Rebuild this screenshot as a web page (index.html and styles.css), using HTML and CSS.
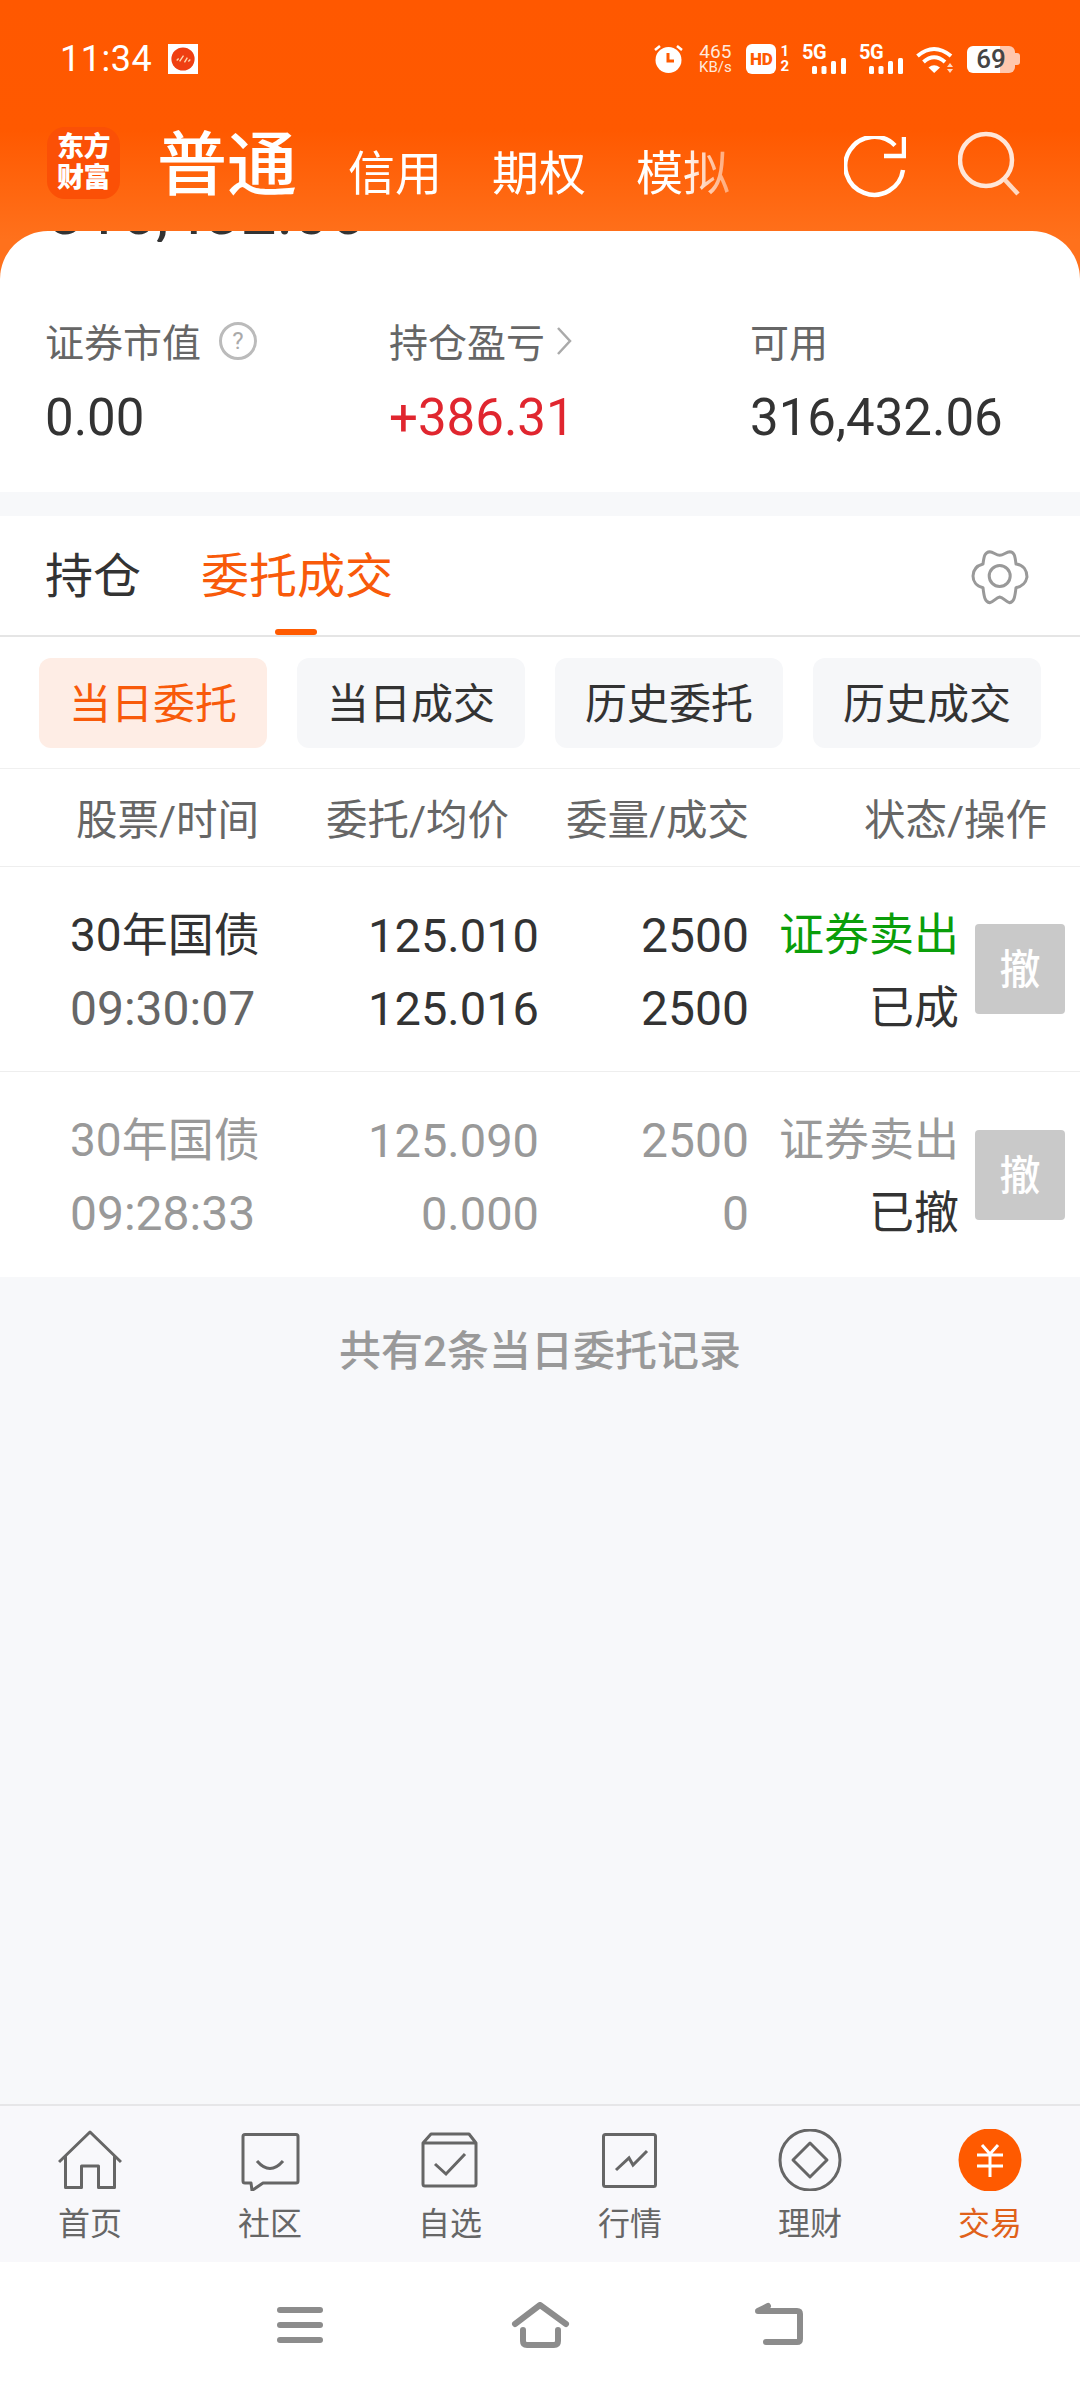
FILE: index.html
```html
<!DOCTYPE html>
<html lang="zh-CN">
<head>
<meta charset="utf-8">
<title>交易</title>
<link rel="stylesheet" href="styles.css">
</head>
<body>
<div class="screen">
  <div class="top">
    <div class="status">
      <div class="status-left">
        <span class="clock">11:34</span>
        <span class="notif"><svg width="30" height="30" viewBox="0 0 31 31"><rect width="31" height="31" fill="#fff"/><circle cx="15.500" cy="15.500" r="12" fill="#ef3f12"/><path d="M9 17l2-2M12 18l4-6M17 19l3-5M21 18l2-2" stroke="#ffd9b0" stroke-width="1.400" fill="none"/></svg></span>
      </div>
      <div class="status-right">
        <svg width="30" height="30" viewBox="0 0 30 30"><circle cx="14.500" cy="16" r="13" fill="#fff"/><path d="M1 6l5-4M28 6l-5-4" stroke="#fff" stroke-width="2.600"/><path d="M14 9v8h6" stroke="#ff5a00" stroke-width="3" fill="none"/></svg>
        <span class="net"><b>465</b><i>KB/s</i></span>
        <span class="hd-wrap"><span class="hd">HD</span><span class="sim"><b>1</b><b>2</b></span></span>
        <span class="sig"><span class="five">5G</span><svg width="34" height="16" viewBox="0 0 34 16"><rect y="8" width="5" height="8" rx="1.500" fill="#fff"/><rect x="9.500" y="8" width="5" height="8" rx="1.500" fill="#fff"/><rect x="19" y="3" width="5" height="13" rx="1.500" fill="#fff"/><rect x="29" width="5" height="16" rx="1.500" fill="#fff"/></svg></span>
        <span class="sig"><span class="five">5G</span><svg width="34" height="16" viewBox="0 0 34 16"><rect y="8" width="5" height="8" rx="1.500" fill="#fff"/><rect x="9.500" y="8" width="5" height="8" rx="1.500" fill="#fff"/><rect x="19" y="3" width="5" height="13" rx="1.500" fill="#fff"/><rect x="29" width="5" height="16" rx="1.500" fill="#fff"/></svg></span>
        <svg width="38" height="30" viewBox="0 0 38 30"><path d="M1.500 12Q18 -2 35 12M7.500 18Q18 8.500 29 18" stroke="#fff" stroke-width="4" fill="none"/><path d="M12.500 23.500Q18 19 24 23.500L18.200 29Z" fill="#fff"/><path d="M34 19l3 4h-6zM34 29l3-4h-6z" fill="#ffd9c2"/></svg>
        <span class="battery"><span class="batt-body">69</span><span class="batt-nub"></span></span>
      </div>
    </div>
    <div class="appbar">
      <div class="logo"><span>东方</span><span>财富</span></div>
      <div class="main-tab">普通</div>
      <div class="sub-tabs"><span>信用</span><span>期权</span><span>模拟</span></div>
      <div class="app-actions">
        <svg width="62" height="62" viewBox="0 0 62 62"><path d="M59 34A29 29 0 1 1 51 9.500" stroke="#fff" stroke-width="4.500" fill="none"/><path d="M40 20H60V1" stroke="#fff" stroke-width="4.500" fill="none"/></svg>
        <svg class="search" width="62" height="66" viewBox="0 0 62 66"><circle cx="28" cy="29" r="26" stroke="#ffe6d8" stroke-width="4.500" fill="none"/><path d="M47 49L60 63" stroke="#ffd9c2" stroke-width="4.500"/></svg>
      </div>
    </div>
    <div class="card">
      <div class="peek"><span>316,432.06</span></div>
      <div class="stats">
        <div class="stat">
          <div class="stat-label">证券市值<span class="help">?</span></div>
          <div class="stat-value">0.00</div>
        </div>
        <div class="stat">
          <div class="stat-label">持仓盈亏<svg class="chev" width="18" height="30" viewBox="0 0 18 30"><path d="M3 2L15 15L3 28" stroke="#aaa" stroke-width="2.500" fill="none"/></svg></div>
          <div class="stat-value up">+386.31</div>
        </div>
        <div class="stat">
          <div class="stat-label">可用</div>
          <div class="stat-value">316,432.06</div>
        </div>
      </div>
    </div>
  </div>

  <div class="panel">
    <div class="tabs">
      <span class="tab">持仓</span>
      <span class="tab tab-on">委托成交</span>
      <svg class="gear" width="60" height="60" viewBox="22 17 60 60"><path d="M51.700 24.300C55.500 24.300 58 21 61.700 20.700C66 21 67 24 68 33C76 34 79 40 79 46C78 51 76 55 68 56.700C67 66 66 71 61.700 71.700C58 71 55.500 66.500 51.700 66C48 66.500 45.500 71 41.700 71.700C37 71 36 66 35 56.700C28 55 25 50 25 45C25 40 28 35 35 33C36 25 37 21 41.700 20.700C45.500 21 48 24.300 51.700 24.300Z" stroke="#999" stroke-width="3" fill="none" stroke-linejoin="round"/><circle cx="51.700" cy="45" r="10.500" stroke="#999" stroke-width="3" fill="none"/></svg>
    </div>
    <div class="filters">
      <span class="filter filter-on">当日委托</span>
      <span class="filter">当日成交</span>
      <span class="filter">历史委托</span>
      <span class="filter">历史成交</span>
    </div>
    <div class="thead">
      <span>股票/时间</span>
      <span>委托/均价</span>
      <span>委量/成交</span>
      <span class="th-end">状态/操作</span>
    </div>
    <div class="order">
      <span class="name">30年国债</span>
      <span class="num">125.010</span>
      <span class="num qty">2500</span>
      <span class="num word buy">证券卖出</span>
      <span class="cancel">撤</span>
      <span class="time">09:30:07</span>
      <span class="num">125.016</span>
      <span class="num qty">2500</span>
      <span class="num word">已成</span>
    </div>
    <div class="order order-off">
      <span class="name">30年国债</span>
      <span class="num">125.090</span>
      <span class="num qty">2500</span>
      <span class="num word">证券卖出</span>
      <span class="cancel">撤</span>
      <span class="time">09:28:33</span>
      <span class="num">0.000</span>
      <span class="num qty">0</span>
      <span class="num word state">已撤</span>
    </div>
  </div>

  <div class="summary">共有2条当日委托记录</div>

  <nav class="bottom">
    <div class="item">
      <svg width="64" height="62" viewBox="0 0 64 62"><path d="M1 33L32 3L63 33M7.500 27V58.500H23.500V37H40.500V58.500H56.500V27" stroke="#666" stroke-width="3" fill="none" stroke-linejoin="round"/></svg>
      <span>首页</span>
    </div>
    <div class="item">
      <svg width="64" height="62" viewBox="0 0 64 62"><path d="M7 5.500H58Q60 5.500 60 7.500V52Q60 54 58 54H25L14 61.500L13 54H7Q5 54 5 52V7.500Q5 5.500 7 5.500Z" stroke="#666" stroke-width="3" fill="none" stroke-linejoin="round"/><path d="M19 32Q32 47 45 32" stroke="#666" stroke-width="3" fill="none"/></svg>
      <span>社区</span>
    </div>
    <div class="item">
      <svg width="64" height="62" viewBox="0 0 64 62"><path d="M13 5H51L58 14V55Q58 57 56 57H7Q5 57 5 55V14ZM5 14H58" stroke="#666" stroke-width="3" fill="none" stroke-linejoin="round"/><path d="M17 35L28 45L47 25" stroke="#666" stroke-width="3" fill="none"/></svg>
      <span>自选</span>
    </div>
    <div class="item">
      <svg width="64" height="62" viewBox="0 0 64 62"><rect x="5.500" y="5.500" width="52" height="52" rx="2" stroke="#666" stroke-width="3" fill="none"/><path d="M18 41L31 29L35 36L49 22" stroke="#666" stroke-width="3" fill="none"/></svg>
      <span>行情</span>
    </div>
    <div class="item">
      <svg width="64" height="62" viewBox="0 0 64 62"><circle cx="32" cy="31" r="30" stroke="#666" stroke-width="3" fill="none"/><path d="M32 14L49 31L32 48L15 31Z" stroke="#666" stroke-width="3" fill="none" stroke-linejoin="round"/></svg>
      <span>理财</span>
    </div>
    <div class="item item-on">
      <svg width="64" height="62" viewBox="0 0 64 62"><circle cx="32" cy="31" r="31.500" fill="#ff5a00"/><path d="M24 16L32 25L40 16M19 26H45M19 37H45M32 26V48" stroke="#fff" stroke-width="3" fill="none"/></svg>
      <span>交易</span>
    </div>
  </nav>

  <div class="sysnav">
    <span class="sys"><svg width="46" height="36" viewBox="0 0 46 36"><rect width="46" height="6" rx="3" fill="#8c8c8c"/><rect y="15" width="46" height="6" rx="3" fill="#8c8c8c"/><rect y="30" width="46" height="6" rx="3" fill="#8c8c8c"/></svg></span>
    <span class="sys"><svg width="60" height="46" viewBox="0 0 60 46"><path d="M5 22L30 3L56 22M13 28V39Q13 43 17 43H44Q48 43 48 39V28" stroke="#8c8c8c" stroke-width="6" fill="none" stroke-linecap="round" stroke-linejoin="round"/></svg></span>
    <span class="sys"><svg width="52" height="46" viewBox="0 0 52 46"><path d="M12 40H43Q46 40 46 37V12Q46 9 43 9H4L14 4" stroke="#8c8c8c" stroke-width="6" fill="none" stroke-linecap="round" stroke-linejoin="round"/></svg></span>
  </div>
</div>
</body>
</html>
```
FILE: styles.css
```css
* { box-sizing: border-box; }
html, body { margin: 0; padding: 0; }
body {
  width: 1080px;
  height: 2388px;
  overflow: hidden;
  font-family: Roboto, "Noto Sans CJK SC", sans-serif;
  background: #f7f8fa;
  color: #333;
}
.screen { display: flex; flex-direction: column; height: 2388px; }

.top {
  background: linear-gradient(180deg, #ff5800 0, #ff5900 130px, #ff711c 240px, #ff711c 290px) no-repeat;
  color: #fff;
}
.status {
  height: 118px;
  padding: 0 60px;
  display: flex;
  align-items: center;
  justify-content: space-between;
}
.status-left { display: flex; align-items: center; gap: 16px; }
.clock { font-size: 36px; letter-spacing: .5px; line-height: 36px; }
.notif { display: flex; }
.status-right { display: flex; align-items: center; gap: 13px; }
.net { display: flex; flex-direction: column; align-items: center; width: 36px; color: #ffe9dc; }
.net b { font-weight: 400; font-size: 19px; line-height: 16px; }
.net i { font-style: normal; font-size: 15px; line-height: 15px; }
.hd-wrap { display: flex; align-items: center; gap: 4px; }
.hd {
  width: 30px; height: 30px; border-radius: 6px;
  background: #fff; color: #ff5a00;
  font-size: 17px; font-weight: 900; line-height: 30px; text-align: center;
}
.sim { display: flex; flex-direction: column; }
.sim b { font-size: 15px; line-height: 15px; font-weight: 700; color: #fff; }
.sig { display: grid; width: 44px; height: 30px; }
.sig > * { grid-area: 1 / 1; }
.five { font-size: 20px; font-weight: 700; line-height: 16px; letter-spacing: -.5px; }
.sig svg { align-self: end; justify-self: end; }
.battery { display: flex; align-items: center; }
.batt-body {
  width: 48px; height: 27px; border-radius: 6px;
  background: linear-gradient(90deg, #fff 0, #fff 33px, #ffc7ad 33px);
  color: #444; font-size: 26px; font-weight: 500; line-height: 27px; text-align: center;
}
.batt-nub { width: 5px; height: 12px; border-radius: 0 3px 3px 0; background: #ffc7ad; }

.appbar {
  height: 113px;
  padding: 0 60px 0 47px;
  display: flex;
  align-items: baseline;
}
.logo {
  width: 73px; height: 72px;
  border-radius: 18px;
  background: #fb5006;
  align-self: center;
  margin-bottom: 23px;
  display: flex; flex-direction: column; align-items: center; justify-content: center;
  font-size: 27px; font-weight: 900; line-height: 31px; letter-spacing: -.5px;
}
.main-tab { margin: 3px 0 0 37px; font-size: 70px; font-weight: 500; line-height: 90px; }
.sub-tabs {
  margin: 6px 0 0 51px;
  display: flex;
  gap: 50px;
  font-size: 47px;
  -webkit-mask-image: linear-gradient(90deg, #000 0, #000 335px, rgba(0,0,0,.5) 375px, rgba(0,0,0,.4) 388px);
  mask-image: linear-gradient(90deg, #000 0, #000 335px, rgba(0,0,0,.5) 375px, rgba(0,0,0,.4) 388px);
}
.app-actions { margin-left: auto; display: flex; gap: 52px; align-self: center; margin-bottom: 15px; }
.search { margin-top: -5px; }

.card {
  background: #fff;
  border-radius: 48px 48px 0 0;
  overflow: hidden;
  height: 261px;
  color: #333;
}
.peek { height: 11px; overflow: hidden; padding-left: 48px; font-size: 64px; line-height: 64px; color: #333; }
.peek span { display: block; margin-top: -50px; }
.stats {
  display: grid;
  grid-template-columns: 344px 361px 1fr;
  padding: 77px 0 0 45px;
}
.stat-label { display: flex; align-items: center; height: 42px; font-size: 39px; color: #666; }
.help {
  width: 38px; height: 38px; margin: 2px 0 0 18px;
  border: 3px solid #bbb; border-radius: 50%;
  color: #aaa; font-size: 24px; line-height: 32px; text-align: center;
}
.chev { margin: 2px 0 0 10px; }
.stat-value { margin-top: 29px; font-size: 51px; line-height: 56px; color: #333; }
.up { color: #e0262f; }

.panel { margin-top: 24px; background: #fff; }
.tabs {
  height: 121px;
  padding: 0 50px 0 45px;
  display: flex;
  align-items: center;
  gap: 60px;
  border-bottom: 2px solid #e5e5e5;
}
.tab { position: relative; font-size: 48px; line-height: 70px; margin-top: 3px; color: #333; }
.tab-on { color: #f85a0a; }
.tab-on::after {
  content: "";
  position: absolute;
  left: 74px; bottom: -23px;
  width: 42px; height: 6px;
  border-radius: 3px;
  background: #ff5a00;
}
.gear { margin-left: auto; margin-top: 5px; }

.filters {
  display: flex;
  gap: 30px;
  padding: 21px 39px 20px;
  border-bottom: 1px solid #f0f0f0;
}
.filter {
  flex: 1;
  height: 90px;
  border-radius: 12px;
  background: #f6f7f9;
  font-size: 42px;
  line-height: 93px;
  text-align: center;
  color: #333;
}
.filter-on { background: #feede5; color: #f85a0a; }

.thead {
  height: 98px;
  padding: 0 33px 2px 76px;
  display: grid;
  grid-template-columns: 250px 240px 183px 1fr;
  align-items: center;
  font-size: 41.500px;
  white-space: nowrap;
  color: #666;
  border-bottom: 1px solid #eee;
}
.th-end { text-align: right; }

.order {
  height: 205px;
  padding: 5px 16px 0 70px;
  display: grid;
  grid-template-columns: 250px 219px 210px 210px 90px;
  grid-template-rows: 73px 73px;
  align-content: center;
  align-items: center;
  font-size: 47px;
  line-height: 73px;
  color: #333;
  border-bottom: 1px solid #eee;
}
.order:last-child { border-bottom: 0; }
.name { color: #333; font-size: 46px; }
.time { color: #666; font-size: 48px; }
.num { text-align: right; }
.qty { font-size: 48px; }
.word { font-size: 45px; }
.buy { color: #0a9e0a; }
.cancel {
  grid-column: 5;
  grid-row: 1 / 3;
  margin: -5px -16px 0 16px;
  width: 90px; height: 90px;
  justify-self: end;
  border-radius: 4px;
  background: #c9c9c9;
  color: #fff;
  font-size: 41px;
  font-weight: 500;
  line-height: 92px;
  text-align: center;
}
.order-off, .order-off .name, .order-off .time { color: #999; }
.order-off .state { color: #333; }

.summary {
  flex: 1;
  padding-top: 47px;
  background: #f7f8fa;
  text-align: center;
  font-size: 42px;
  line-height: 56px;
  font-weight: 500;
  color: #999;
}

.bottom {
  height: 158px;
  display: grid;
  grid-template-columns: repeat(6, 180px);
  background: #f8f8fb;
  border-top: 2px solid #e6e6e8;
}
.item { display: flex; flex-direction: column; align-items: center; padding-top: 23px; font-size: 32px; color: #666; }
.item span { line-height: 42px; margin-top: 12px; }
.item-on { color: #e0611a; }

.sysnav {
  height: 126px;
  background: #fff;
  display: flex;
  justify-content: center;
}
.sys { width: 240px; display: flex; align-items: center; justify-content: center; }
```
